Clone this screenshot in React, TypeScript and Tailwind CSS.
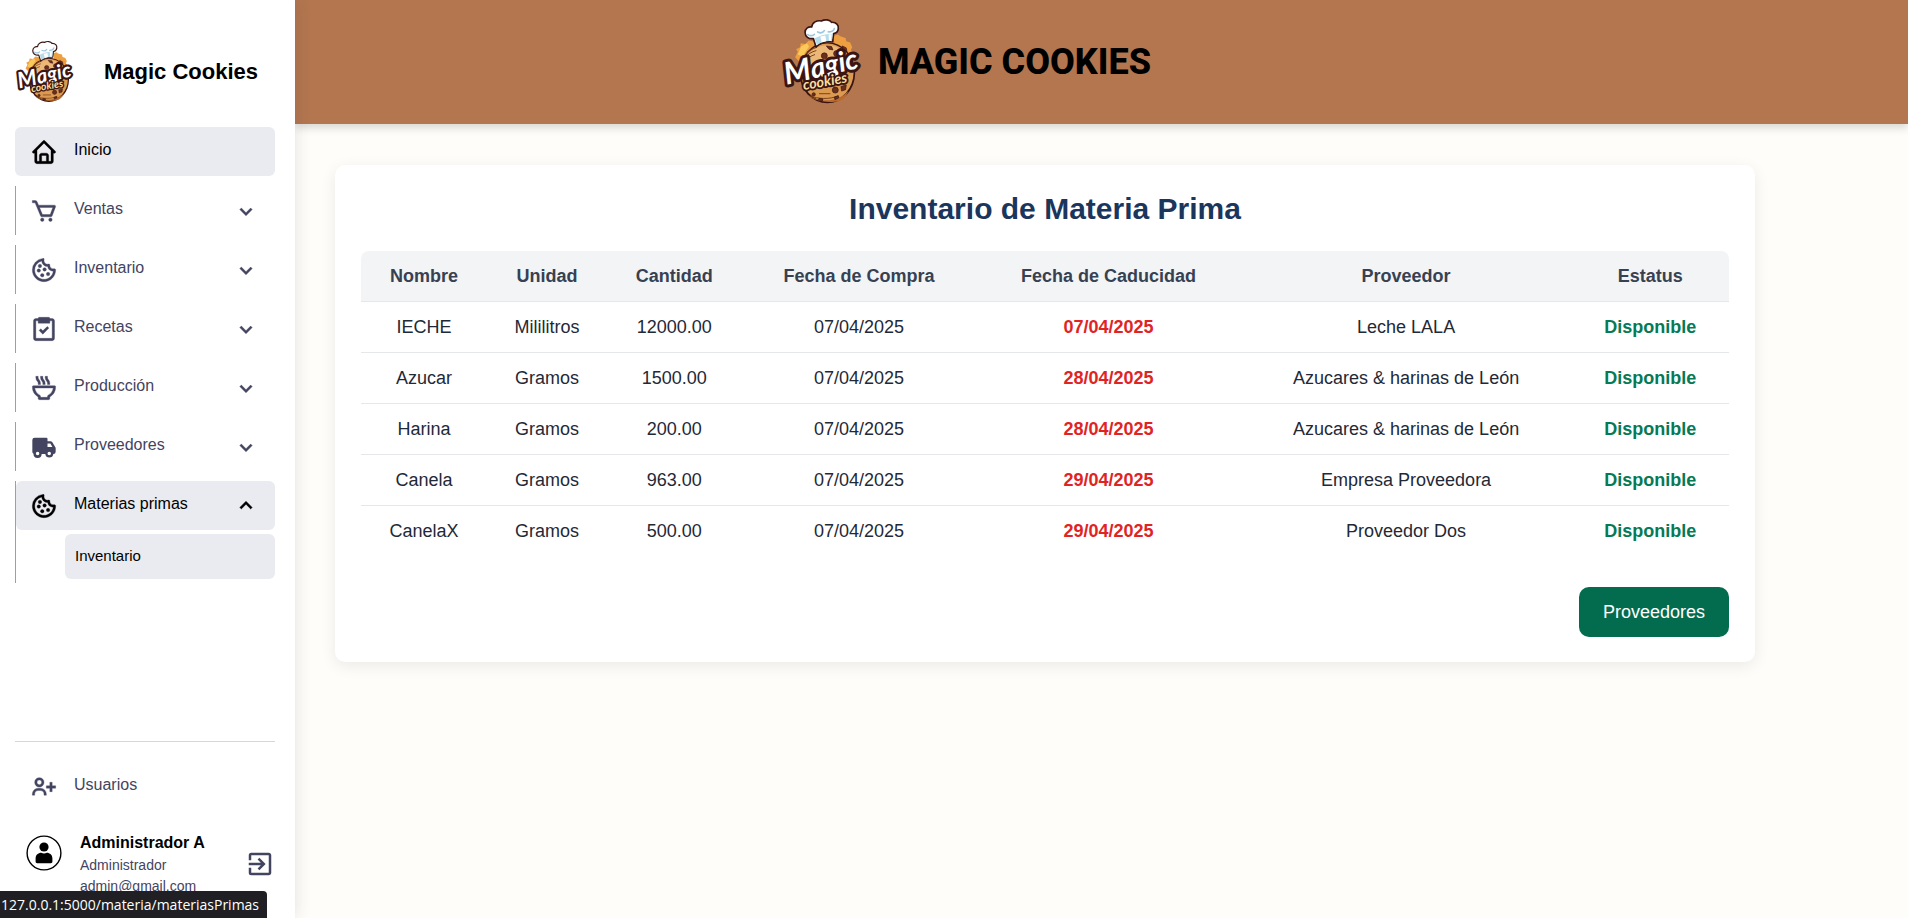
import type { ReactNode } from "react";
import {
  BiBowlHot,
  BiCart,
  BiChevronDown,
  BiChevronUp,
  BiCookie,
  BiHome,
  BiSolidTruck,
  BiTask,
  BiUserPlus,
} from "react-icons/bi";
import { MdExitToApp } from "react-icons/md";

function Logo({ className }: { className: string }) {
  return (
    <svg viewBox="60 50 250 265" className={className} role="img" aria-label="Magic Cookies">
      <path
        d="M104 168l8-16-5-8 12-6 2-12 14 2 10-10 22 4-20 40-28 22zM218 104l14-4 10 6 14 4 2 10 12 4 6 14-4 8 8 12-14 14-40-30z"
        fill="#ee9f40"
      />
      <path d="M112 160l10-24 18-10 6 10-20 30z" fill="#f9c95a" />
      <ellipse cx="201" cy="215" rx="84" ry="92" fill="#3a1513" />
      <ellipse cx="201" cy="214" rx="79" ry="87" fill="#dc9a50" />
      <path d="M128 184c18-44 62-60 98-48 26 10 44 34 50 62l-60 40-78 10z" fill="#ecb877" />
      <path d="M138 278c30 26 94 30 126-8-10 34-40 34-62 32-26-2-50-8-64-24z" fill="#b96a2c" />
      <path
        d="M136 160c10-12 20-18 34-22M132 172c10-14 22-20 36-24M130 184c10-14 22-20 34-24M262 160c8 10 12 20 14 34M150 284c20 10 60 12 84 0M176 278h34"
        stroke="#7c3f1c"
        strokeWidth="3"
        fill="none"
      />
      <g fill="#6b2d1c" stroke="#3a1513" strokeWidth="2">
        <circle cx="192" cy="164" r="9" />
        <circle cx="229" cy="157" r="9" />
        <path d="M198 134l16 2 4 10-12-2zM246 134l12 6 2 10-12-6z" />
        <circle cx="225" cy="267" r="9" />
        <circle cx="160" cy="280" r="5" />
        <path d="M242 256l16-4-2 14-12 4zM176 292l12 2-2 6-12-4zM222 288l12-4 2 6-12 6z" />
      </g>
      <path
        d="M167 137l-8-25c-14 2-25-6-25-18 0-13 11-19 20-17 1-14 16-21 29-18 11-6 26-4 31 4 14-1 22 9 20 20-1 9-8 13-14 14l-3 24c-18-2-36 3-50 16z"
        fill="#fff"
        stroke="#3a1513"
        strokeWidth="5"
        strokeLinejoin="round"
      />
      <path d="M163 111c18-10 36-14 54-13l-2 22c-17-2-32 2-45 12z" fill="#b5dcea" />
      <path d="M180 106l4 18 14-4-3-17zM205 100l1 18 6 1 2-20z" fill="#fff" />
      <path
        d="M142 100c6 4 14 4 20-1M172 92c8 4 16 2 20-4M204 92c8 0 16-3 18-10"
        stroke="#9cc7dc"
        strokeWidth="5"
        fill="none"
        strokeLinecap="round"
      />
      <g
        fontFamily="'Lato', 'Liberation Sans', sans-serif"
        fontStyle="italic"
        stroke="#3a1513"
        strokeLinejoin="round"
        paintOrder="stroke"
      >
        <text
          x="78"
          y="251"
          transform="rotate(-13 78 251)"
          fontWeight="700"
          fontSize="84"
          fill="#fff"
          strokeWidth="18"
        >
          <tspan fontSize="92">M</tspan>agic
        </text>
        <text
          x="130"
          y="267"
          transform="rotate(-10 130 267)"
          fontWeight="700"
          fontSize="43"
          fill="#f8dfa0"
          strokeWidth="11"
        >
          cookies
        </text>
      </g>
    </svg>
  );
}

function Avatar() {
  return (
    <svg viewBox="0 0 36 36" className="size-9 shrink-0" aria-hidden="true">
      <circle cx="18" cy="18" r="16.9" fill="#fff" stroke="#000" strokeWidth="1.4" />
      <circle cx="18" cy="12" r="4.6" />
      <path d="M9.6 26.6v-3.2c0-3.4 2.6-5.6 5.6-5.6 1.8 1 3.8 1 5.6 0 3 0 5.6 2.2 5.6 5.6v3.2c0 1-.6 1.6-1.6 1.6H11.2c-1 0-1.6-.6-1.6-1.6z" />
    </svg>
  );
}

const sections = [
  { label: "Ventas", icon: <BiCart strokeWidth="0.3" /> },
  { label: "Inventario", icon: <BiCookie strokeWidth="0.3" /> },
  { label: "Recetas", icon: <BiTask strokeWidth="0.3" /> },
  { label: "Producción", icon: <BiBowlHot strokeWidth="0.3" /> },
  { label: "Proveedores", icon: <BiSolidTruck /> },
];

const linkRow = "flex h-[49px] w-full items-center gap-4 pl-[15px] pr-4 text-left text-base";
const groupRow = "flex h-[49px] w-full items-center gap-4 pl-[14px] pr-4 text-left text-base";

function RowContent({ icon, label, chevron }: { icon: ReactNode; label: string; chevron?: ReactNode }) {
  return (
    <>
      <span className="text-[28px]">{icon}</span>
      <span className="flex-1 pb-1">{label}</span>
      {chevron && <span className="text-[26px]">{chevron}</span>}
    </>
  );
}

function Sidebar() {
  return (
    <aside className="z-10 flex w-[295px] shrink-0 flex-col bg-white pb-[21px] pl-[15px] pr-5 text-[#434460] shadow-[0_0_16px_rgba(49,51,60,0.14)]">
      <div className="flex h-[127px] items-center gap-[29px] pt-4">
        <Logo className="h-[64px] w-[60px]" />
        <span className="text-[22px] font-bold text-black">Magic Cookies</span>
      </div>
      <nav className="flex flex-1 flex-col gap-[10px]">
        <a href="#inicio" className={`${linkRow} rounded-md bg-[#eaebf0] text-black`}>
          <RowContent icon={<BiHome strokeWidth="0.3" />} label="Inicio" />
        </a>
        {sections.map((s) => (
          <div key={s.label} className="border-l border-[#9a9cb8]">
            <button type="button" className={groupRow}>
              <RowContent icon={s.icon} label={s.label} chevron={<BiChevronDown strokeWidth="0.4" />} />
            </button>
          </div>
        ))}
        <div className="border-l border-[#9a9cb8] pb-1 text-black">
          <button type="button" aria-expanded="true" className={`${groupRow} rounded-md bg-[#eaebf0]`}>
            <RowContent
              icon={<BiCookie strokeWidth="0.3" />}
              label="Materias primas"
              chevron={<BiChevronUp strokeWidth="0.4" />}
            />
          </button>
          <a
            href="#materiasPrimas"
            className="ml-[49px] mt-1 flex h-[45px] items-center rounded-md bg-[#eaebf0] pl-[10px] text-[15px]"
          >
            Inventario
          </a>
        </div>
      </nav>
      <div className="mt-5 border-t border-[#d5d6de] pt-5">
        <a href="#usuarios" className={linkRow}>
          <RowContent icon={<BiUserPlus strokeWidth="0.3" />} label="Usuarios" />
        </a>
        <div className="mt-5 flex items-center pl-[11px]">
          <div className="self-start pt-1">
            <Avatar />
          </div>
          <div className="ml-[18px] flex-1 text-sm leading-[21px]">
            <p className="text-base font-bold text-black">Administrador A</p>
            <p>Administrador</p>
            <p>admin@gmail.com</p>
          </div>
          <button type="button" aria-label="Cerrar sesión" className="text-[30px]">
            <MdExitToApp />
          </button>
        </div>
      </div>
    </aside>
  );
}

const columns = [
  { title: "Nombre", width: "w-[9.2%]" },
  { title: "Unidad", width: "w-[8.8%]" },
  { title: "Cantidad", width: "w-[9.8%]" },
  { title: "Fecha de Compra", width: "w-[17.2%]" },
  { title: "Fecha de Caducidad", width: "w-[19.3%]" },
  { title: "Proveedor", width: "w-[24.2%]" },
  { title: "Estatus", width: "w-[11.5%]" },
];

const materials = [
  ["IECHE", "Mililitros", "12000.00", "07/04/2025", "07/04/2025", "Leche LALA"],
  ["Azucar", "Gramos", "1500.00", "07/04/2025", "28/04/2025", "Azucares & harinas de León"],
  ["Harina", "Gramos", "200.00", "07/04/2025", "28/04/2025", "Azucares & harinas de León"],
  ["Canela", "Gramos", "963.00", "07/04/2025", "29/04/2025", "Empresa Proveedora"],
  ["CanelaX", "Gramos", "500.00", "07/04/2025", "29/04/2025", "Proveedor Dos"],
];

function InventoryCard() {
  return (
    <section className="ml-10 mt-[41px] max-w-[1420px] rounded-[10px] bg-white px-[26px] pb-[25px] pt-[26px] shadow-[0_4px_16px_rgba(0,0,0,0.08)]">
      <h1 className="text-center text-[30px] font-bold leading-9 text-[#1b365d]">Inventario de Materia Prima</h1>
      <div className="mt-6 overflow-hidden rounded-t-lg">
        <table className="w-full table-fixed text-center text-lg leading-[26px] text-[#1f2937]">
          <thead className="bg-[#f3f4f6] text-[#374151]">
            <tr className="border-b border-[#e5e7eb]">
              {columns.map((c) => (
                <th key={c.title} scope="col" className={`${c.width} py-3 font-bold`}>
                  {c.title}
                </th>
              ))}
            </tr>
          </thead>
          <tbody>
            {materials.map((m) => (
              <tr key={m[0]} className="border-b border-[#e5e7eb] last:border-b-0">
                <td className="py-3">{m[0]}</td>
                <td>{m[1]}</td>
                <td>{m[2]}</td>
                <td>{m[3]}</td>
                <td className="font-bold text-[#e02424]">{m[4]}</td>
                <td>{m[5]}</td>
                <td className="font-bold text-[#057a55]">Disponible</td>
              </tr>
            ))}
          </tbody>
        </table>
      </div>
      <div className="mt-[31px] flex justify-end">
        <button type="button" className="h-[50px] rounded-[10px] bg-[#046c4e] px-6 text-lg text-white">
          Proveedores
        </button>
      </div>
    </section>
  );
}

export default function App() {
  return (
    <div className="flex min-h-screen bg-[#fffdf9] font-['Liberation_Sans',Arial,sans-serif]">
      <Sidebar />
      <div className="flex min-w-0 flex-1 flex-col">
        <header className="flex h-[124px] items-center justify-center gap-[14px] bg-[#b3764f] pr-[272px] shadow-[0_4px_8px_rgba(0,0,0,0.15)]">
          <Logo className="h-[88px] w-[84px]" />
          <span className="font-[Roboto,'Liberation_Sans',sans-serif] text-4xl font-extrabold text-black">
            MAGIC COOKIES
          </span>
        </header>
        <main className="pb-10 pr-10">
          <InventoryCard />
        </main>
      </div>
      <div className="fixed bottom-0 left-0 z-20 flex h-[27px] items-center rounded-tr bg-[#202024] pl-px pr-2 font-['Open_Sans','Noto_Sans',sans-serif] text-sm text-white">
        127.0.0.1:5000/materia/materiasPrimas
      </div>
    </div>
  );
}
